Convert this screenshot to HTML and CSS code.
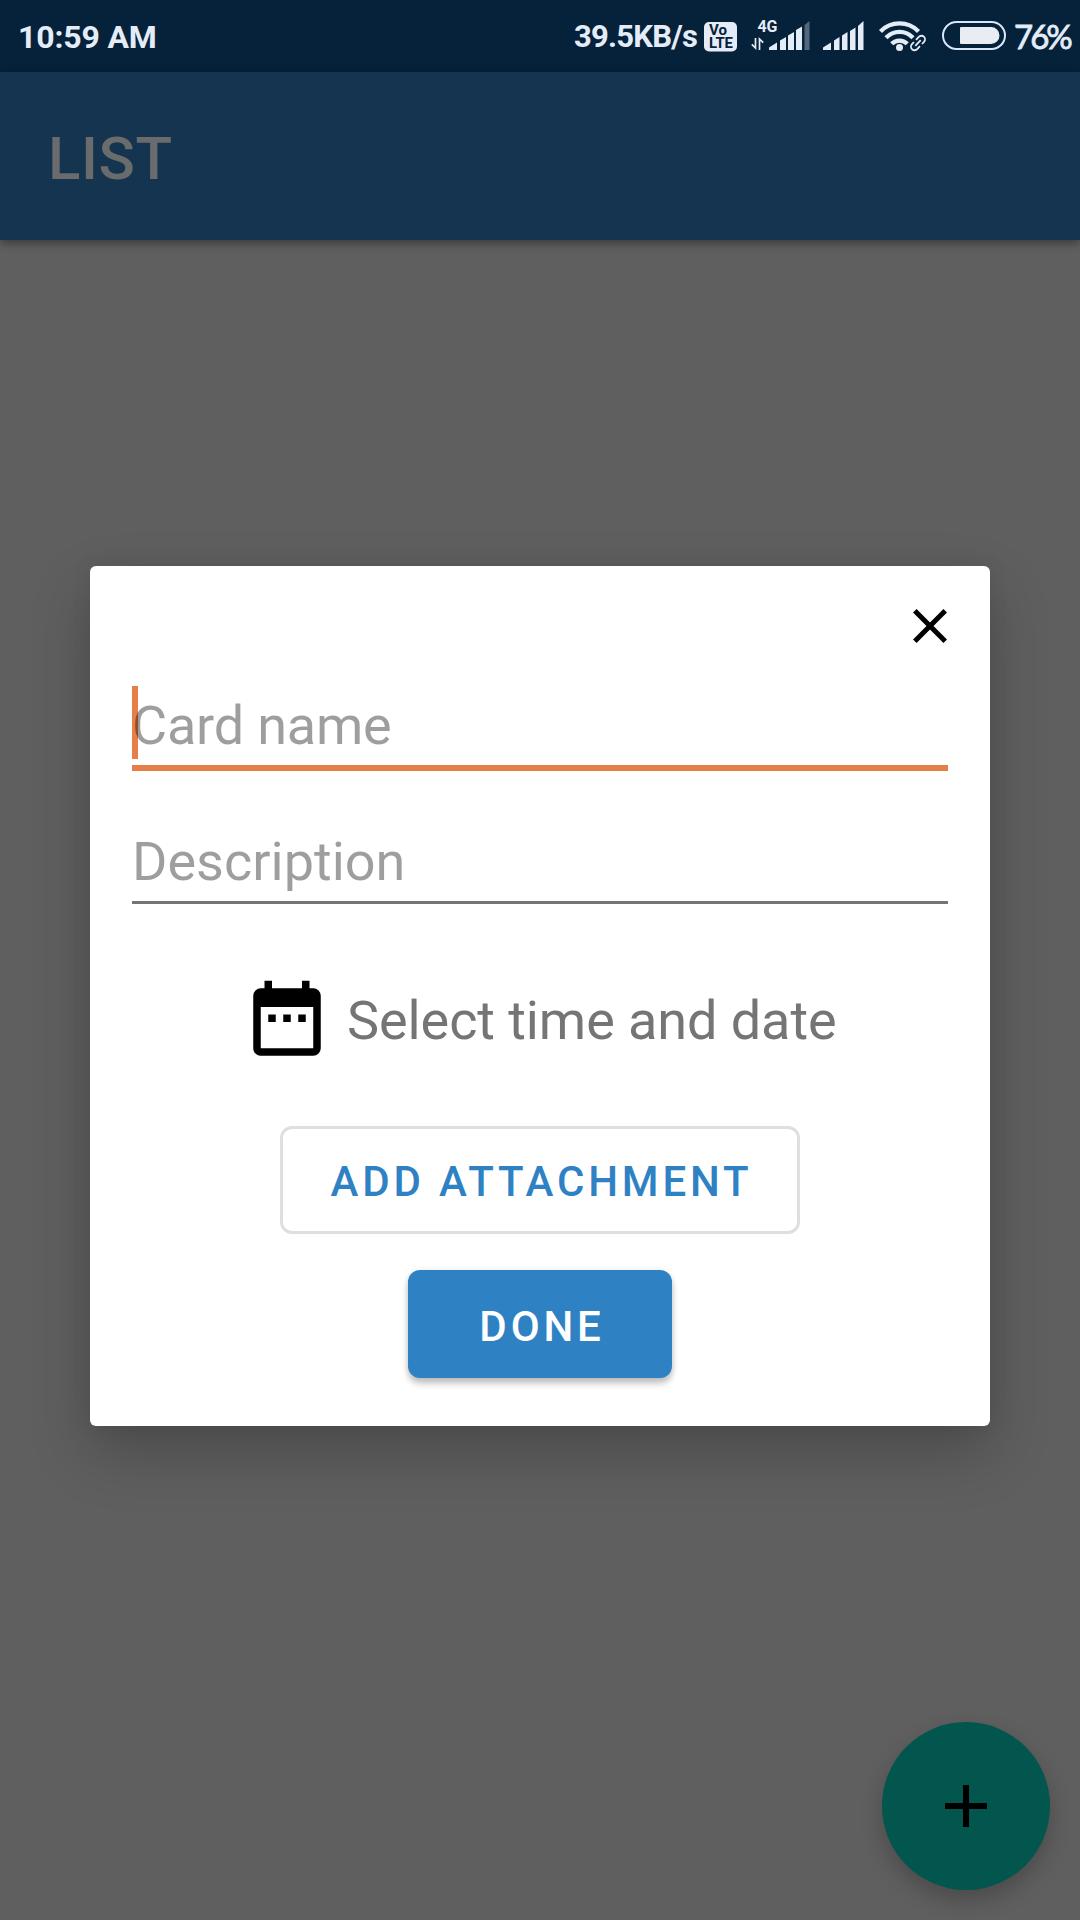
FILE: index.html
```html
<!DOCTYPE html>
<html lang="en">
<head>
<meta charset="utf-8">
<title>List</title>
<link rel="stylesheet" href="styles.css">
</head>
<body>
<div class="screen">
  <header class="status">
    <span class="status-time">10:59 AM</span>
    <div class="status-right">
      <span class="speed">39.5KB/s</span>
      <svg class="volte" width="33" height="30" viewBox="0 0 33 30">
        <rect width="33" height="29.500" rx="5" fill="#e4edf7"/>
        <text class="volte-text" x="5" y="13" textLength="18" lengthAdjust="spacingAndGlyphs">Vo</text>
        <text class="volte-text" x="5" y="26" textLength="24" lengthAdjust="spacingAndGlyphs">LTE</text>
      </svg>
      <svg class="signal-4g" width="60" height="34" viewBox="0 0 60 34">
        <text class="net-text" x="6.500" y="15" textLength="20">4G</text>
        <path d="M4.500 21v10L.8 27.300M8.500 33V22l3.700 3.700" fill="none" stroke="#e4edf7" stroke-width="1.700"/>
        <g fill="#e4edf7"><path d="M18 33v-2.500l8-5V33z"/><path d="M29 33v-9.500l6-3.500v13z"/><path d="M37 33V18.500l6-3.500v18z"/><path d="M45 33V13l6-3.500V33z"/></g>
        <path d="M53.500 33V8l5-4v29z" fill="#53677e"/>
      </svg>
      <svg class="signal" width="41" height="30" viewBox="0 0 41 30" fill="#e4edf7">
        <path d="M0 29v-2.500l8-5V29z"/><path d="M11 29v-9.500l5.500-3.500v13z"/><path d="M19 29V14.500l5.500-3.500v18z"/><path d="M27 29V10l5.500-3.500V29z"/><path d="M35 29V5l5.500-5v29z"/>
      </svg>
      <svg class="wifi" width="50" height="32" viewBox="0 0 50 32">
        <g fill="none" stroke="#e4edf7" stroke-width="4.300"><path d="M2.500 11.500a26.500 26.500 0 0 1 38 0"/><path d="M8 17.800a18.500 18.500 0 0 1 27 0"/><path d="M13.700 23.800a11 11 0 0 1 15.600 0"/></g>
        <circle cx="21.500" cy="27.500" r="3.500" fill="#e4edf7"/>
        <g transform="translate(40 23) rotate(-47)">
          <rect x="-10.500" y="-5.700" width="21" height="11.400" rx="5" fill="#06213a"/>
          <path d="M1-3.600h4a3.600 3.600 0 0 1 0 7.200h-3M-1 3.600h-4a3.600 3.600 0 0 1 0-7.200h3M-4 0h8" fill="none" stroke="#e4edf7" stroke-width="1.800"/>
        </g>
      </svg>
      <svg class="battery" width="64" height="29" viewBox="0 0 64 29">
        <rect x="1" y="1" width="62" height="27" rx="13.500" fill="none" stroke="#d7e7f8" stroke-width="2"/>
        <path d="M19 6h30a8.500 8.500 0 0 1 0 17H19a1 1 0 0 1-1-1V7a1 1 0 0 1 1-1z" fill="#e9ecf1"/>
      </svg>
      <span class="percent">76%</span>
    </div>
  </header>
  <div class="appbar"><h1 class="title">LIST</h1></div>
  <main class="content"></main>

  <button class="fab" aria-label="Add">
    <svg width="42" height="42" viewBox="0 0 42 42"><path d="M0 21h42M21 0v42" stroke="#000" stroke-width="6"/></svg>
  </button>

  <section class="dialog">
    <div class="dialog-head">
      <svg width="34" height="34" viewBox="0 0 34 34"><path d="M1.800 1.800l30.400 30.400M32.200 1.800L1.800 32.200" stroke="#000" stroke-width="5"/></svg>
    </div>
    <div class="field field-focused"><span class="caret"></span><span class="hint">Card name</span></div>
    <div class="field field-plain"><span class="hint">Description</span></div>
    <div class="date">
      <svg width="90" height="90" viewBox="0 0 24 24"><path d="M9 10H7v2h2zm4 0h-2v2h2zm4 0h-2v2h2zm2-7h-1V1h-2v2H8V1H6v2H5a2 2 0 0 0-2 2v14c0 1.100.9 2 2 2h14a2 2 0 0 0 2-2V5a2 2 0 0 0-2-2zm0 16H5V8h14z"/></svg>
      <span class="date-text">Select time and date</span>
    </div>
    <button class="btn btn-outline">ADD ATTACHMENT</button>
    <button class="btn btn-fill">DONE</button>
  </section>
</div>
</body>
</html>
```
FILE: styles.css
```css
* { box-sizing: border-box; }
body { margin: 0; font-family: Roboto, sans-serif; }
svg { display: block; flex: none; }
button { padding: 0; border: 0; font-family: inherit; }

.screen {
  position: relative;
  display: flex;
  flex-direction: column;
  width: 1080px;
  height: 1920px;
  overflow: hidden;
  background: #5f5f5f;
}

.status {
  display: flex;
  justify-content: space-between;
  height: 72px;
  padding: 0 4px 0 18px;
  background: #06213a;
  color: #e4edf7;
  font-size: 32px;
  font-weight: 700;
  line-height: 72px;
  white-space: nowrap;
}
.status-time { padding-top: 1px; letter-spacing: -.15px; }
.status-right { display: flex; align-items: flex-start; width: 502px; }
.speed { width: 130px; flex: none; padding-top: 1px; font-size: 31px; letter-spacing: -.75px; }
.volte { margin-top: 22px; }
.volte-text { font: 700 14px/1 Roboto, sans-serif; fill: #06213a; }
.signal-4g { margin: 17px 0 0 14px; }
.net-text { font: 700 16px/1 Roboto, sans-serif; fill: #e4edf7; }
.signal { margin: 21px 0 0 12px; }
.wifi { margin: 20px 0 0 14px; }
.battery { margin: 21px 0 0 14px; }
.percent { margin-left: 8px; font-family: Lato, sans-serif; font-size: 33px; font-weight: 400; letter-spacing: -3px; -webkit-text-stroke: .8px #e4edf7; }

.appbar {
  z-index: 1;
  display: flex;
  align-items: center;
  height: 168px;
  padding: 0 48px;
  background: #14344f;
  box-shadow: 0 3px 9px rgba(0, 0, 0, .4);
}
.title { margin: 5px 0 0; color: #6a6b6d; font-size: 60px; font-weight: 500; line-height: 70px; letter-spacing: .6px; }
.content { flex: 1; }

.fab {
  position: absolute;
  right: 30px;
  bottom: 30px;
  display: flex;
  align-items: center;
  justify-content: center;
  width: 168px;
  height: 168px;
  border-radius: 50%;
  background: #02564e;
  box-shadow: 0 10px 22px rgba(0, 0, 0, .22);
}

.dialog {
  position: absolute;
  z-index: 2;
  top: 566px;
  left: 90px;
  display: flex;
  flex-direction: column;
  align-items: center;
  width: 900px;
  height: 860px;
  padding: 0 42px;
  border-radius: 6px;
  background: #fff;
  box-shadow: 0 26px 60px rgba(0, 0, 0, .22), 0 0 20px rgba(0, 0, 0, .08);
}
.dialog-head { display: flex; justify-content: flex-end; width: 100%; height: 120px; padding: 43px 1px 0 0; }
.field { position: relative; width: 100%; padding: 3px 0; font-size: 54px; line-height: 73px; }
.field-focused { border-bottom: 6px solid #e67e48; letter-spacing: -.2px; }
.field-plain { margin-top: 51px; border-bottom: 3px solid #757575; }
.hint { position: relative; display: block; color: rgba(0, 0, 0, .38); }
.caret { position: absolute; top: 0; left: 0; width: 6px; height: 73px; background: #e67e48; }
.date { display: flex; align-items: center; gap: 15px; width: 100%; height: 90px; margin-top: 73px; padding-left: 110px; }
.date-text { padding-bottom: 3px; color: #757575; font-size: 54px; line-height: 73px; letter-spacing: -.08px; }
.btn { flex: none; height: 108px; border-radius: 12px; font-size: 42px; font-weight: 500; letter-spacing: 3.85px; line-height: 106px; }
.btn-outline { width: 520px; margin-top: 59px; padding: 3px 0 0 3px; border: 3px solid #dfdfdf; background: #fff; color: #2e82c4; line-height: 99px; }
.btn-fill { width: 264px; margin-top: 36px; padding: 4px 0 0 4px; background: #2e82c4; color: #fff; box-shadow: 0 6px 6px rgba(0, 0, 0, .2), 0 1px 6px rgba(0, 0, 0, .12); }
```
